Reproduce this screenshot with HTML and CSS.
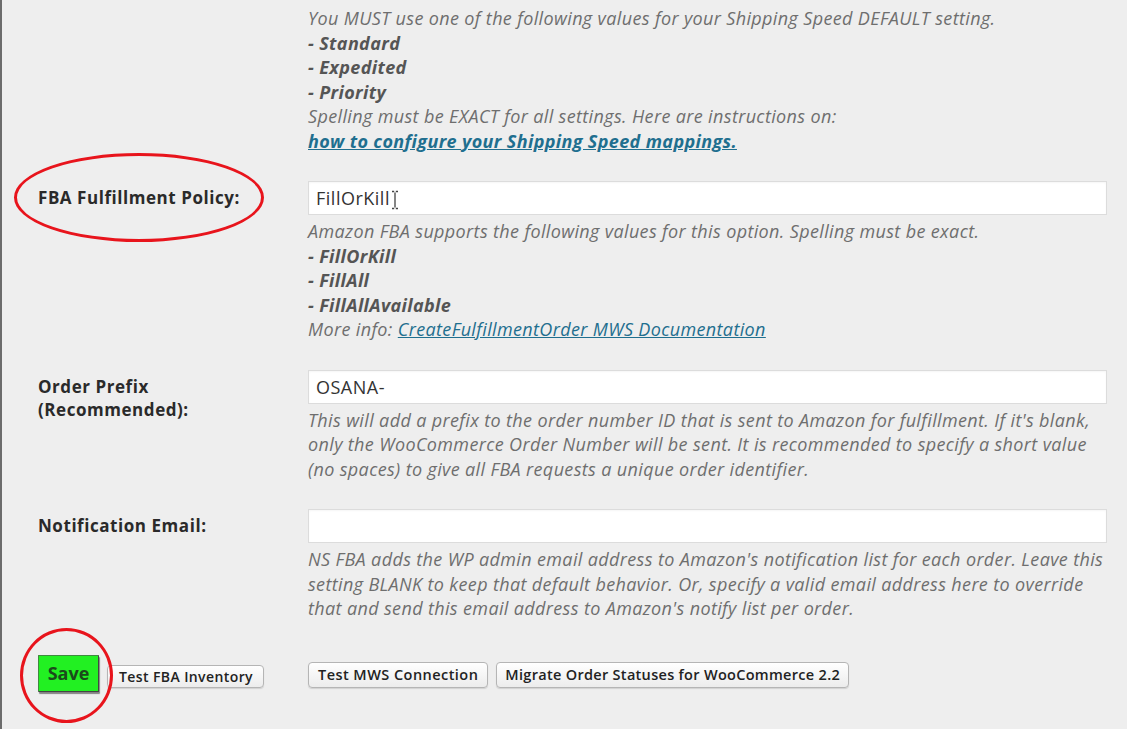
FILE: index.html
```html
<!DOCTYPE html>
<html>
<head>
<meta charset="utf-8">
<link rel="stylesheet" href="styles.css">
</head>
<body>
<div class="page">
  <div class="row row-intro">
    <div class="label"></div>
    <div class="field">
      <div class="desc">
        You MUST use one of the following values for your Shipping Speed DEFAULT setting.<br>
        <b>- Standard</b><br>
        <b>- Expedited</b><br>
        <b>- Priority</b><br>
        Spelling must be EXACT for all settings. Here are instructions on:<br>
        <a class="link strong" href="#">how to configure your Shipping Speed mappings.</a>
      </div>
    </div>
  </div>

  <div class="row">
    <div class="label">FBA Fulfillment Policy:</div>
    <div class="field">
      <div class="input"><span class="value">FillOrKill</span><svg class="ibeam" width="8" height="20" viewBox="0 0 8 20"><path d="M1 1.5h2.2M4.8 1.5H7M1 18.5h2.2M4.8 18.5H7M4 2.5v15" stroke="#444" stroke-width="1.3" fill="none"/></svg></div>
      <div class="desc">
        Amazon FBA supports the following values for this option. Spelling must be exact.<br>
        <b>- FillOrKill</b><br>
        <b>- FillAll</b><br>
        <b>- FillAllAvailable</b><br>
        More info: <a class="link" href="#">CreateFulfillmentOrder MWS Documentation</a>
      </div>
    </div>
  </div>

  <div class="row">
    <div class="label">Order Prefix<br>(Recommended):</div>
    <div class="field">
      <div class="input"><span class="value">OSANA-</span></div>
      <div class="desc">
        This will add a prefix to the order number ID that is sent to Amazon for fulfillment. If it's blank, only the WooCommerce Order Number will be sent. It is recommended to specify a short value (no spaces) to give all FBA requests a unique order identifier.
      </div>
    </div>
  </div>

  <div class="row">
    <div class="label">Notification Email:</div>
    <div class="field">
      <div class="input"></div>
      <div class="desc">
        NS FBA adds the WP admin email address to Amazon's notification list for each order. Leave this setting BLANK to keep that default behavior. Or, specify a valid email address here to override that and send this email address to Amazon's notify list per order.
      </div>
    </div>
  </div>

  <div class="row row-buttons">
    <div class="label buttons-left">
      <button class="btn-save">Save</button>
      <button class="btn btn-small">Test FBA Inventory</button>
    </div>
    <div class="field buttons-right">
      <button class="btn">Test MWS Connection</button>
      <button class="btn btn-wide">Migrate Order Statuses for WooCommerce 2.2</button>
    </div>
  </div>

  <div class="annot annot-policy"></div>
  <div class="annot annot-save"></div>
</div>
</body>
</html>
```

FILE: styles.css
```css
html, body {
  margin: 0;
  padding: 0;
}
body {
  background: #eeeeee;
  font-family: "Open Sans", "Liberation Sans", sans-serif;
  color: #222;
  width: 1127px;
  height: 729px;
  overflow: hidden;
}
.page {
  position: relative;
  height: 729px;
  border-left: 2px solid #6c6c6c;
  box-sizing: border-box;
  padding-top: 6px;
}
.row {
  display: flex;
  margin-top: 28px;
}
.row-intro {
  margin-top: 0;
}
.label {
  width: 270px;
  padding-left: 36px;
  flex: none;
  font-weight: 700;
  font-size: 17px;
  letter-spacing: 0.55px;
  line-height: 23px;
  padding-top: 5px;
  color: #2a2a2a;
}
.row-intro .label {
  padding-top: 0;
}
.field {
  width: 799px;
  flex: none;
}
.desc {
  font-style: italic;
  font-size: 18px;
  letter-spacing: 0.36px;
  line-height: 24.5px;
  color: #6e6e6e;
  margin-top: 4px;
  margin-right: -8px;
}
.row-intro .desc {
  margin-top: 0;
}
.desc b {
  color: #555;
  font-weight: 700;
}
.link {
  color: #1f6f8f;
  text-decoration: underline;
}
.link.strong {
  font-weight: 700;
}
.input {
  height: 34px;
  box-sizing: border-box;
  background: #fff;
  border: 1px solid #dcdcdc;
  box-shadow: inset 0 1px 2px rgba(0,0,0,0.04);
  display: flex;
  align-items: center;
  padding-left: 7px;
  font-size: 18px;
  letter-spacing: 0.5px;
  color: #333;
}
.ibeam {
  margin-left: 1px;
  margin-top: 4px;
}
.row-buttons {
  margin-top: 34px;
  align-items: flex-start;
}
.buttons-left {
  padding-top: 0;
  display: flex;
  align-items: flex-start;
  gap: 8px;
  letter-spacing: 0;
}
.buttons-right {
  display: flex;
  gap: 8px;
  padding-top: 7px;
}
button {
  font-family: "Open Sans", "Liberation Sans", sans-serif;
  margin: 0;
  cursor: default;
}
.btn {
  height: 26px;
  padding: 0 9px;
  font-size: 14.5px;
  letter-spacing: 0.45px;
  font-weight: 600;
  color: #222;
  background: linear-gradient(#ffffff, #ececec);
  border: 1px solid #b5b5b5;
  border-radius: 4px;
  box-shadow: 0 1px 1px rgba(0,0,0,0.12);
}
.btn-wide {
  padding: 0 8px;
  letter-spacing: 0.3px;
}
.btn-small {
  margin-top: 10px;
  height: 23px;
  font-size: 14px;
  letter-spacing: 0.4px;
  padding: 0 8px 0 11px;
  width: 157px;
  text-align: left;
}
.btn-save {
  width: 61px;
  height: 37px;
  padding: 0;
  font-size: 18px;
  font-weight: 700;
  color: #1b4a1b;
  background: #22f022;
  border: 1px solid #3f8a3f;
  border-right-color: #444;
  border-bottom-color: #444;
  border-radius: 1px;
  box-shadow: 1px 2px 1px rgba(0,0,0,0.45);
}
.annot {
  position: absolute;
  border: 3.5px solid #e8141c;
  border-radius: 50%;
  box-sizing: border-box;
  pointer-events: none;
}
.annot-policy {
  left: 12px;
  top: 153px;
  width: 250px;
  height: 89px;
}
.annot-save {
  left: 18px;
  top: 628px;
  width: 93px;
  height: 95px;
}
```
